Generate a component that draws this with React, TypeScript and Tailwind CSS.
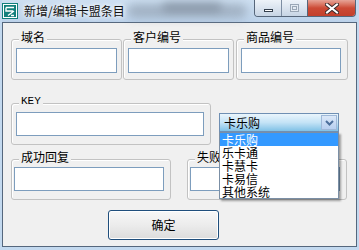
import React from "react";

const font = { fontFamily: '"Noto Sans CJK SC", "Liberation Sans", sans-serif' };

function Group({
  label,
  className,
  mono,
  children,
}: {
  label: string;
  className: string;
  mono?: boolean;
  children?: React.ReactNode;
}) {
  return (
    <div
      className={
        "relative shrink-0 rounded-[3px] border border-[#c2c2c2] shadow-[inset_1px_1px_0_#ffffff] " +
        className
      }
    >
      <span
        className={
          "absolute left-[7px] top-[-10px] bg-[#f0f0f0] px-[2px] leading-[14px] text-[#000] " +
          (mono ? "text-[11px]" : "text-[12px]")
        }
        style={mono ? { fontFamily: '"Liberation Mono", monospace' } : undefined}
      >
        {label}
      </span>
      {children}
    </div>
  );
}

function Input({ className }: { className: string }) {
  return <div className={"border border-[#7d9dbd] bg-white " + className} />;
}

export default function App() {
  const items = ["卡乐购", "乐卡通", "卡慧卡", "卡易信", "其他系统"];
  return (
    <div
      className="flex h-[250px] w-[359px] flex-col overflow-hidden bg-[#c3d9ef] px-[2px] pb-[3px]"
      style={font}
    >
      {/* Title bar */}
      <div className="relative flex h-[22px] shrink-0 items-start bg-gradient-to-b from-[#cddff1] to-[#bcd2ea]">
        <div className="pointer-events-none absolute left-[125px] top-[4px] h-[14px] w-[120px] rounded-full bg-[#8a98a8] opacity-60 blur-[5px]" />
        <div className="pointer-events-none absolute left-[160px] top-[2px] h-[10px] w-[60px] rounded-full bg-[#6f7c8b] opacity-50 blur-[4px]" />
        <svg width="16" height="16" viewBox="0 0 16 16" className="relative ml-[0px] mt-[3px] shrink-0">
          <rect x="0" y="0" width="16" height="16" fill="#127f7c" />
          <rect x="1.5" y="1.5" width="13" height="13" fill="none" stroke="#ffffff" strokeWidth="1" />
          <path d="M4 4.5 H12 M4 4.5 V8 H11 M12 8 L6 12.5 M9 12.5 H12" stroke="#ffffff" strokeWidth="1.4" fill="none" />
        </svg>
        <span className="relative ml-[6px] mt-[3px] text-[12px] leading-[16px] text-[#111] [text-shadow:0_0_6px_#ffffff,0_0_4px_#ffffff]">
          新增/编辑卡盟条目
        </span>
        <div className="relative ml-auto mr-[1px] flex h-[17px] overflow-hidden rounded-b-[4px] border border-t-0 border-[#56667a]">
          <div className="flex w-[27px] items-center justify-center border-r border-[#7d8ea3] bg-gradient-to-b from-[#eef3f9] to-[#c7d5e5]">
            <div className="mt-[5px] h-[3px] w-[9px] border border-[#333f4d] bg-white" />
          </div>
          <div className="flex w-[26px] items-center justify-center border-r border-[#56667a] bg-gradient-to-b from-[#eef3f9] to-[#c7d5e5]">
            <div className="h-[8px] w-[9px] border border-[#9aa7b6] bg-[#e3eaf2]">
              <div className="mx-auto mt-[1px] h-[4px] w-[5px] border border-[#9aa7b6]" />
            </div>
          </div>
          <div className="flex w-[47px] items-center justify-center bg-gradient-to-b from-[#e6a497] via-[#cc4a35] to-[#c2402c]">
            <svg width="14" height="11" viewBox="0 0 14 11">
              <path d="M2 1.5 L12 9.5 M12 1.5 L2 9.5" stroke="#3a2a2a" strokeWidth="4" strokeLinecap="square" />
              <path d="M2 1.5 L12 9.5 M12 1.5 L2 9.5" stroke="#ffffff" strokeWidth="2" strokeLinecap="square" />
            </svg>
          </div>
        </div>
      </div>

      {/* Content */}
      <div className="flex flex-1 flex-col border border-[#55677d] bg-[#f0f0f0] text-[12px]">
        {/* Row 1 */}
        <div className="ml-[8px] mt-[16px] flex h-[41px]">
          <Group label="域名" className="h-[41px] w-[111px]">
            <Input className="ml-[4px] mt-[8px] h-[25px] w-[101px]" />
          </Group>
          <Group label="客户编号" className="ml-[1px] h-[41px] w-[111px]">
            <Input className="ml-[4px] mt-[8px] h-[25px] w-[101px]" />
          </Group>
          <Group label="商品编号" className="ml-[2px] h-[41px] w-[112px]">
            <Input className="ml-[4px] mt-[8px] h-[25px] w-[100px]" />
          </Group>
        </div>

        {/* Row 2 */}
        <div className="ml-[8px] mt-[23px] flex h-[42px] items-start">
          <Group label="KEY" mono className="h-[42px] w-[200px]">
            <Input className="ml-[4px] mt-[8px] h-[24px] w-[188px]" />
          </Group>
          <div className="relative z-10 ml-[8px] mt-[10px]">
            <div className="flex h-[19px] w-[120px] items-center border border-[#6f8fb3] bg-gradient-to-b from-[#eaf5fc] via-[#c4e3f6] to-[#7fc1e6] pl-[4px]">
              <span className="flex-1 text-[12px] leading-[14px] text-black">卡乐购</span>
              <div className="mr-[1px] flex h-[15px] w-[16px] items-center justify-center border border-[#9fb8d8] bg-gradient-to-b from-[#dbe8f8] to-[#b8cff0]">
                <svg width="9" height="6" viewBox="0 0 9 6">
                  <path d="M1 1 L4.5 4.5 L8 1" stroke="#4d6f9c" strokeWidth="2" fill="none" />
                </svg>
              </div>
            </div>
            <div className="absolute left-0 top-full flex w-[120px] flex-col border border-[#7b8fa5] bg-white shadow-[2px_2px_2px_rgba(0,0,0,0.35)]">
              {items.map((t, i) => (
                <div
                  key={t}
                  className={
                    "h-[13px] pl-[2px] text-[12px] leading-[13px] " +
                    (i === 0 ? "bg-[#3399ff] text-white" : "text-black")
                  }
                >
                  {t}
                </div>
              ))}
            </div>
          </div>
        </div>

        {/* Row 3 */}
        <div className="ml-[8px] mt-[14px] flex h-[41px]">
          <Group label="成功回复" className="h-[41px] w-[160px]">
            <Input className="ml-[2px] mt-[7px] h-[24px] w-[150px]" />
          </Group>
          <Group label="失败回复" className="ml-[16px] h-[41px] w-[160px]">
            <Input className="ml-[2px] mt-[7px] h-[24px] w-[150px]" />
          </Group>
        </div>

        {/* Button */}
        <div className="ml-[105px] mt-[10px] flex">
          <button className="flex h-[30px] w-[111px] items-center justify-center rounded-[3px] border border-[#1f4e7c] bg-gradient-to-b from-[#f7f7f7] via-[#ececec] to-[#dcdcdc] text-[12px] text-black shadow-[inset_0_0_0_1px_#ffffff]">
            确定
          </button>
        </div>
      </div>
    </div>
  );
}
